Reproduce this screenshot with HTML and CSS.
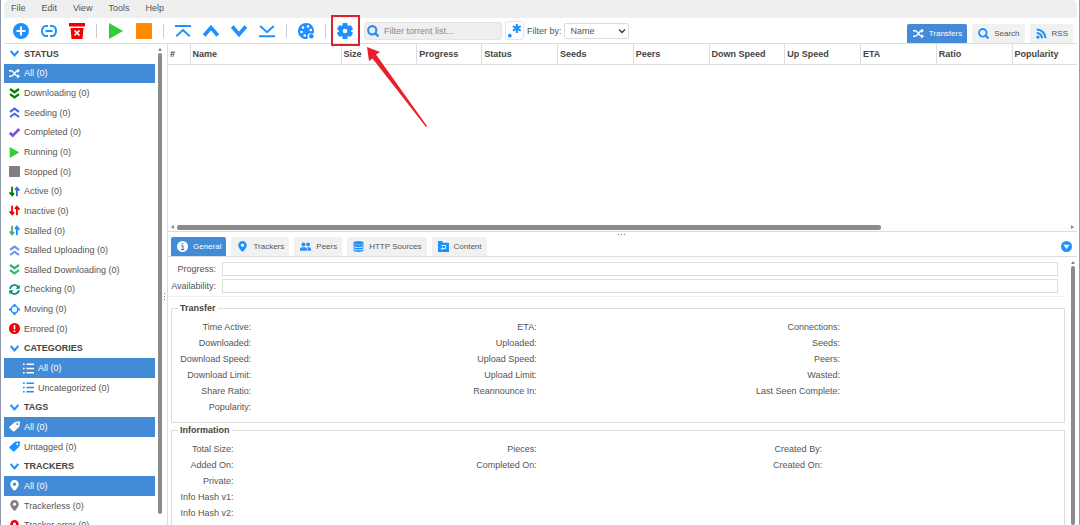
FILE: index.html
```html
<!DOCTYPE html>
<html lang="en">

<head>
    <meta charset="UTF-8">
    <title>qBittorrent WebUI</title>
    <link rel="stylesheet" href="styles.css">
</head>

<body>
    <!-- icon set -->
    <svg class="sprite" aria-hidden="true">
        <symbol id="i-add" viewBox="0 0 16 16"><circle cx="8" cy="8" r="8" fill="currentColor"/><path d="M8 3.500v9M3.500 8h9" stroke="#fff" stroke-width="2"/></symbol>
        <symbol id="i-link" viewBox="0 0 16 16"><path d="M7 3H5.200C2.500 3 1 5.300 1 8s1.500 5 4.200 5H7M9 3h1.800C13.500 3 15 5.300 15 8s-1.500 5-4.200 5H9M4.500 8h7" fill="none" stroke="currentColor" stroke-width="2"/><path d="M8 2v3M8 11v3" stroke="#fff" stroke-width="1.400"/></symbol>
        <symbol id="i-delete" viewBox="0 0 16 16"><path d="M0 0h16v3.500H0zM1.500 5h13L13.500 16h-11z" fill="#f00000"/><path d="M5.500 7.500l5 5M10.500 7.500l-5 5" stroke="#fff" stroke-width="1.700"/></symbol>
        <symbol id="i-play" viewBox="0 0 16 16"><path d="M1 0l14 8-14 8z" fill="#32cd32"/></symbol>
        <symbol id="i-stop" viewBox="0 0 16 16"><rect width="16" height="16" rx="1" fill="currentColor"/></symbol>
        <symbol id="i-top" viewBox="0 0 16 16"><path d="M0 3h16M1.200 13.200L8 7l6.800 6.200" fill="none" stroke="currentColor" stroke-width="2"/></symbol>
        <symbol id="i-up" viewBox="0 0 16 16"><path d="M1.200 12.500L8 4.500l6.800 8" fill="none" stroke="currentColor" stroke-width="3.700"/></symbol>
        <symbol id="i-down" viewBox="0 0 16 16"><path d="M1.200 3.500L8 11.500l6.800-8" fill="none" stroke="currentColor" stroke-width="3.700"/></symbol>
        <symbol id="i-bottom" viewBox="0 0 16 16"><path d="M0 13.200h16M1.200 3L8 9.200 14.800 3" fill="none" stroke="currentColor" stroke-width="2"/></symbol>
        <symbol id="i-palette" viewBox="0 0 16 16"><path d="M8.500 0C3.800 0 0 3.500 0 8.200 0 12.500 3.500 16 8 16c1.500 0 2.200-1 1.700-2.400-.5-1.500.3-3.100 2-3.100 2 0 3.800.8 4.200-1.300C16.600 4 13 0 8.500 0z" fill="currentColor"/><g fill="#fff"><circle cx="5" cy="4.500" r="1.300"/><circle cx="10" cy="3.500" r="1.300"/><circle cx="3.500" cy="9" r="1.300"/><circle cx="12.800" cy="7" r="1.300"/><circle cx="6.800" cy="12.500" r="1.300"/></g><circle cx="13.300" cy="13.200" r="2.300" fill="currentColor"/></symbol>
        <symbol id="i-gear" viewBox="0 0 16 16"><g fill="currentColor"><circle cx="8" cy="8" r="6.200"/><rect x="5.500" y="0" width="5" height="16" rx="1"/><rect x="5.500" y="0" width="5" height="16" rx="1" transform="rotate(60 8 8)"/><rect x="5.500" y="0" width="5" height="16" rx="1" transform="rotate(120 8 8)"/></g><circle cx="8" cy="8" r="2.300" fill="#fff"/></symbol>
        <symbol id="i-search" viewBox="0 0 16 16"><circle cx="7" cy="7" r="5.500" fill="none" stroke="currentColor" stroke-width="2.800"/><path d="M11 11l4.300 4.300" stroke="currentColor" stroke-width="3.200"/></symbol>
        <symbol id="i-regex" viewBox="0 0 16 16"><circle cx="3" cy="13.500" r="2" fill="currentColor"/><path d="M10.500 1v9.600M6.300 3.400l8.400 4.800M14.700 3.400L6.300 8.200" stroke="currentColor" stroke-width="2.200"/></symbol>
        <symbol id="i-shuffle" viewBox="0 0 16 16"><path d="M0 4h3.500c3 0 5.500 8 9 8h.5M0 12h3.500c3 0 5.500-8 9-8h.5" fill="none" stroke="currentColor" stroke-width="2.200"/><path d="M12 .6l4 3.400-4 3.400zM12 8.600l4 3.400-4 3.400z" fill="currentColor"/></symbol>
        <symbol id="i-rss" viewBox="0 0 16 16"><circle cx="2.800" cy="13.200" r="2.400" fill="currentColor"/><path d="M1 7.200A7.800 7.800 0 0 1 8.800 15M1 2.200A12.800 12.800 0 0 1 13.800 15" fill="none" stroke="currentColor" stroke-width="3"/></symbol>
        <symbol id="i-down2" viewBox="0 0 16 16"><path d="M1.500 1.500L8 6.200l6.500-4.700M1.500 9L8 13.700 14.500 9" fill="none" stroke="currentColor" stroke-width="3.300"/></symbol>
        <symbol id="i-up2" viewBox="0 0 16 16"><path d="M1.500 7L8 2.300 14.500 7M1.500 14.500L8 9.800l6.500 4.700" fill="none" stroke="currentColor" stroke-width="3"/></symbol>
        <symbol id="i-check" viewBox="0 0 16 16"><path d="M1.200 8.500l4.300 4L14.800 3" fill="none" stroke="currentColor" stroke-width="3.900"/></symbol>
        <symbol id="i-updown" viewBox="0 0 16 16"><path d="M4.500 1v11M.8 9.200l3.700 4.300 2.800-3.200" class="arrow-left"/><path d="M11.500 15V4M8.700 5.700l2.800-3.200 3.700 4.300" class="arrow-right"/></symbol>
        <symbol id="i-refresh" viewBox="0 0 16 16"><path d="M1.500 7A6.500 6.500 0 0 1 13 4M14.500 9A6.500 6.500 0 0 1 3 12" fill="none" stroke="currentColor" stroke-width="2.400"/><path d="M15.500 1v6h-6zM.5 15V9h6z" fill="currentColor"/></symbol>
        <symbol id="i-target" viewBox="0 0 16 16"><circle cx="8" cy="8" r="5" fill="none" stroke="currentColor" stroke-width="2.200"/><path d="M8 0v3M8 13v3M0 8h3M13 8h3" stroke="currentColor" stroke-width="3"/></symbol>
        <symbol id="i-error" viewBox="0 0 16 16"><circle cx="8" cy="8" r="8" fill="#f00000"/><path d="M8 3v6M8 10.800v2.200" stroke="#fff" stroke-width="2.400"/></symbol>
        <symbol id="i-list" viewBox="0 0 16 16"><path d="M0 1.800h2.500M0 8h2.500M0 14.200h2.500M5 1.800h11M5 8h11M5 14.200h11" stroke="currentColor" stroke-width="2.200"/></symbol>
        <symbol id="i-tag" viewBox="0 0 16 16"><path d="M8.500 1.500L15 .5c.6 0 1 .4 1 1l-.8 6.500-7.200 7c-.7.700-1.500.7-2.200 0L.7 10.300c-.6-.6-.6-1.500 0-2.100z" fill="currentColor"/><circle cx="12" cy="4.500" r="1.500" class="hole"/></symbol>
        <symbol id="i-pin" viewBox="0 0 16 16"><path d="M8 0a6.200 6.200 0 0 0-6.200 6.200C1.800 10.500 8 16 8 16s6.200-5.500 6.200-9.800A6.200 6.200 0 0 0 8 0z" fill="currentColor"/><circle cx="8" cy="6" r="2.300" class="hole"/></symbol>
        <symbol id="i-info" viewBox="0 0 16 16"><circle cx="8" cy="8" r="8" fill="#fff"/><path d="M6 7h2.500v5.500M5.800 12.500h5M7 3.800h2" fill="none" stroke="#438bd6" stroke-width="1.800"/></symbol>
        <symbol id="i-peers" viewBox="0 0 16 16"><g fill="currentColor"><circle cx="5" cy="5" r="2.900"/><circle cx="11.800" cy="5" r="2.700"/><path d="M0 14v-2.500C0 9.500 2.500 9 5 9s5 .5 5 2.500V14zM11 14v-3c0-.8-.3-1.400-.8-1.900 3.300-.3 5.800.3 5.800 2.400V14z"/></g></symbol>
        <symbol id="i-db" viewBox="0 0 16 16"><g fill="currentColor"><ellipse cx="8" cy="2.800" rx="7.500" ry="2.800"/><path d="M.5 4.500c2 2.300 13 2.300 15 0v2c-1 3-14 3-15 0zM.5 8.200c2 2.300 13 2.300 15 0v2c-1 3-14 3-15 0zM.5 11.900c2 2.300 13 2.300 15 0v1.600c-1 3.300-14 3.300-15 0z"/></g></symbol>
        <symbol id="i-folder" viewBox="0 0 16 16"><path d="M0 0h6l1.500 2.500H16V16H0z" fill="currentColor"/><path d="M5 6.500h6v4.500H5M6.800 9L4.800 11l2 2" fill="none" stroke="#fff" stroke-width="1.300"/></symbol>
        <symbol id="i-collapse" viewBox="0 0 16 16"><circle cx="8" cy="8" r="8" fill="currentColor"/><path d="M3.500 5.500h9L8 11.500z" fill="#fff"/></symbol>
    </svg>

    <div class="app">
        <nav class="menubar">
            <a href="#">File</a>
            <a href="#">Edit</a>
            <a href="#">View</a>
            <a href="#">Tools</a>
            <a href="#">Help</a>
        </nav>

        <div class="toolbar">
            <div class="actions">
                <button type="button" aria-label="Add torrent file"><svg><use href="#i-add"/></svg></button>
                <button type="button" aria-label="Add torrent link"><svg><use href="#i-link"/></svg></button>
                <button type="button" aria-label="Remove"><svg><use href="#i-delete"/></svg></button>
                <span class="separator"></span>
                <button type="button" aria-label="Start"><svg><use href="#i-play"/></svg></button>
                <button type="button" aria-label="Stop" class="orange"><svg><use href="#i-stop"/></svg></button>
                <span class="separator"></span>
                <button type="button" aria-label="Move to top"><svg><use href="#i-top"/></svg></button>
                <button type="button" aria-label="Move up"><svg><use href="#i-up"/></svg></button>
                <button type="button" aria-label="Move down"><svg><use href="#i-down"/></svg></button>
                <button type="button" aria-label="Move to bottom"><svg><use href="#i-bottom"/></svg></button>
                <span class="separator"></span>
                <button type="button" aria-label="Color scheme"><svg><use href="#i-palette"/></svg></button>
                <span class="separator"></span>
                <button type="button" aria-label="Options" class="marked">
                    <svg><use href="#i-gear"/></svg>
                    <span class="mark-box"></span>
                    <svg class="mark-arrow" viewBox="0 0 62 82"><path d="M1 1l13 5-4 2.500L61 80l-1 1L6.500 12.500 3 15z" fill="#e8202a"/></svg>
                </button>
            </div>
            <div class="search">
                <svg><use href="#i-search"/></svg>
                <input type="text" placeholder="Filter torrent list..." aria-label="Filter torrent list">
            </div>
            <button type="button" class="regex" aria-label="Use regular expressions"><svg><use href="#i-regex"/></svg></button>
            <label for="filterBy">Filter by:</label>
            <div class="select">
                <select id="filterBy">
                    <option>Name</option>
                    <option>Save path</option>
                </select>
                <svg viewBox="0 0 16 16"><path d="M2 5l6 6 6-6" fill="none" stroke="#333" stroke-width="2.600"/></svg>
            </div>
            <div class="tabs main-tabs">
                <button type="button" class="selected"><svg><use href="#i-shuffle"/></svg>Transfers</button>
                <button type="button"><svg><use href="#i-search"/></svg>Search</button>
                <button type="button"><svg><use href="#i-rss"/></svg>RSS</button>
            </div>
        </div>

        <div class="desktop">
            <aside class="sidebar">
                <div class="filters">
                    <button type="button" class="title"><svg><use href="#i-down"/></svg>STATUS</button>
                    <button type="button" class="selected"><svg><use href="#i-shuffle"/></svg>All (0)</button>
                    <button type="button"><svg class="green"><use href="#i-down2"/></svg>Downloading (0)</button>
                    <button type="button"><svg class="royal"><use href="#i-up2"/></svg>Seeding (0)</button>
                    <button type="button"><svg class="purple"><use href="#i-check"/></svg>Completed (0)</button>
                    <button type="button"><svg><use href="#i-play"/></svg>Running (0)</button>
                    <button type="button"><svg class="gray"><use href="#i-stop"/></svg>Stopped (0)</button>
                    <button type="button"><svg class="active"><use href="#i-updown"/></svg>Active (0)</button>
                    <button type="button"><svg class="inactive"><use href="#i-updown"/></svg>Inactive (0)</button>
                    <button type="button"><svg class="stalled"><use href="#i-updown"/></svg>Stalled (0)</button>
                    <button type="button"><svg class="cornflower"><use href="#i-up2"/></svg>Stalled Uploading (0)</button>
                    <button type="button"><svg class="seagreen"><use href="#i-down2"/></svg>Stalled Downloading (0)</button>
                    <button type="button"><svg class="teal"><use href="#i-refresh"/></svg>Checking (0)</button>
                    <button type="button"><svg><use href="#i-target"/></svg>Moving (0)</button>
                    <button type="button"><svg><use href="#i-error"/></svg>Errored (0)</button>
                    <button type="button" class="title"><svg><use href="#i-down"/></svg>CATEGORIES</button>
                    <button type="button" class="nested selected"><svg><use href="#i-list"/></svg>All (0)</button>
                    <button type="button" class="nested"><svg><use href="#i-list"/></svg>Uncategorized (0)</button>
                    <button type="button" class="title"><svg><use href="#i-down"/></svg>TAGS</button>
                    <button type="button" class="selected"><svg><use href="#i-tag"/></svg>All (0)</button>
                    <button type="button"><svg><use href="#i-tag"/></svg>Untagged (0)</button>
                    <button type="button" class="title"><svg><use href="#i-down"/></svg>TRACKERS</button>
                    <button type="button" class="selected"><svg><use href="#i-pin"/></svg>All (0)</button>
                    <button type="button"><svg class="gray"><use href="#i-pin"/></svg>Trackerless (0)</button>
                    <button type="button"><svg class="red"><use href="#i-pin"/></svg>Tracker error (0)</button>
                </div>
                <div class="scroll-v"><span class="tip"></span><span class="thumb"></span></div>
            </aside>

            <div class="splitter"><i></i><i></i><i></i></div>

            <main class="content">
                <section class="transfers">
                    <div class="table-wrap">
                        <table class="torrents">
                            <thead>
                                <tr>
                                    <th class="w-num">#</th>
                                    <th class="w-name">Name</th>
                                    <th>Size</th>
                                    <th class="w-small">Progress</th>
                                    <th>Status</th>
                                    <th>Seeds</th>
                                    <th>Peers</th>
                                    <th>Down Speed</th>
                                    <th>Up Speed</th>
                                    <th>ETA</th>
                                    <th>Ratio</th>
                                    <th class="w-small">Popularity</th>
                                </tr>
                            </thead>
                        </table>
                    </div>
                    <div class="scroll-h"><span class="tip"></span><span class="track"><span class="thumb"></span></span><span class="tip right"></span></div>
                </section>

                <section class="details">
                    <div class="details-head">
                        <div class="handle"><i></i><i></i><i></i></div>
                        <div class="tabs">
                            <button type="button" class="selected"><svg><use href="#i-info"/></svg>General</button>
                            <button type="button"><svg><use href="#i-pin"/></svg>Trackers</button>
                            <button type="button"><svg><use href="#i-peers"/></svg>Peers</button>
                            <button type="button"><svg><use href="#i-db"/></svg>HTTP Sources</button>
                            <button type="button"><svg><use href="#i-folder"/></svg>Content</button>
                        </div>
                        <button type="button" class="collapse" aria-label="Collapse panel"><svg><use href="#i-collapse"/></svg></button>
                    </div>

                    <div class="details-body">
                        <div class="general">
                            <div class="bars">
                                <label for="progress">Progress:</label>
                                <progress id="progress" value="0" max="100"></progress>
                                <label for="availability">Availability:</label>
                                <progress id="availability" value="0" max="100"></progress>
                            </div>

                            <fieldset>
                                <legend>Transfer</legend>
                                <table class="props transfer">
                                    <colgroup><col class="a"><col class="b"><col class="c"></colgroup>
                                    <tr><th>Time Active:</th><th>ETA:</th><th>Connections:</th><td></td></tr>
                                    <tr><th>Downloaded:</th><th>Uploaded:</th><th>Seeds:</th><td></td></tr>
                                    <tr><th>Download Speed:</th><th>Upload Speed:</th><th>Peers:</th><td></td></tr>
                                    <tr><th>Download Limit:</th><th>Upload Limit:</th><th>Wasted:</th><td></td></tr>
                                    <tr><th>Share Ratio:</th><th>Reannounce In:</th><th>Last Seen Complete:</th><td></td></tr>
                                    <tr><th>Popularity:</th><td></td><td></td><td></td></tr>
                                </table>
                            </fieldset>

                            <fieldset class="last">
                                <legend>Information</legend>
                                <table class="props info">
                                    <colgroup><col class="a"><col class="b"><col class="c"></colgroup>
                                    <tr><th>Total Size:</th><th>Pieces:</th><th>Created By:</th><td></td></tr>
                                    <tr><th>Added On:</th><th>Completed On:</th><th>Created On:</th><td></td></tr>
                                    <tr><th>Private:</th><td></td><td></td><td></td></tr>
                                    <tr><th>Info Hash v1:</th><td></td><td></td><td></td></tr>
                                    <tr><th>Info Hash v2:</th><td></td><td></td><td></td></tr>
                                </table>
                            </fieldset>
                        </div>
                        <div class="scroll-v"><span class="tip"></span><span class="thumb"></span></div>
                    </div>
                </section>
            </main>
        </div>
    </div>
</body>

</html>
```
FILE: styles.css
```css
* {
    box-sizing: border-box;
}

body {
    margin: 0;
    font: 9px/12px "Liberation Sans", Arial, sans-serif;
    color: #555;
    background-color: #fff;
}

button,
input,
select {
    font: inherit;
    color: inherit;
    margin: 0;
    padding: 0;
    border: 0;
    background: none;
}

svg {
    display: block;
    flex: none;
    color: #1e90ff;
}

.sprite {
    display: none;
}

.app {
    display: flex;
    flex-direction: column;
    height: 100vh;
    padding: 0 2px 0 3px;
    border-left: 1px solid #8d97aa;
    border-right: 1px solid #a0a0a0;
    overflow: hidden;
}

/* menu */
.menubar {
    display: flex;
    flex: none;
    gap: 16px;
    height: 18px;
    padding: 2px 7px;
    background-color: #efefef;
    border-radius: 6px 6px 0 0;
}

.menubar a {
    color: inherit;
    text-decoration: none;
}

/* toolbar */
.toolbar {
    display: flex;
    flex: none;
    align-items: center;
    height: 26px;
    padding: 0 4px 0 3px;
    border-bottom: 1px solid #ddd;
}

.actions {
    display: flex;
    align-items: center;
}

.actions button {
    padding: 0 6px;
}

.actions svg {
    width: 16px;
    height: 16px;
}

.actions .orange svg {
    color: #ff8c00;
}

.separator {
    width: 1px;
    height: 14px;
    margin: 0 5px;
    background-color: #ccc;
}

/* callout over the options button */
.marked {
    position: relative;
}

.mark-box {
    position: absolute;
    inset: -8px -1px -7px 0;
    border: 2px solid #d9232e;
}

.actions .mark-arrow {
    position: absolute;
    left: 35px;
    top: 23px;
    width: 62px;
    height: 82px;
    z-index: 2;
}

.search {
    display: flex;
    align-items: center;
    gap: 5px;
    width: 138px;
    height: 18px;
    margin-left: 5px;
    padding: 0 2px;
    border: 1px solid #e4e4e4;
    border-radius: 3px;
    background-color: #efefef;
}

.search svg {
    width: 12px;
    height: 12px;
}

.search input {
    width: 100%;
    min-width: 0;
    outline: 0;
}

.search input::placeholder {
    color: #888;
}

.regex {
    margin: 0 3px;
    padding: 1px;
    border: 1px solid #e4e4e4;
    border-radius: 3px;
}

.regex svg {
    width: 15px;
    height: 15px;
}

.select {
    display: grid;
    align-items: center;
    width: 65px;
    height: 16px;
    margin-left: 2px;
    border: 1px solid #ddd;
    border-radius: 2px;
}

.select select {
    grid-area: 1 / 1;
    width: 100%;
    padding-left: 6px;
    appearance: none;
}

.select svg {
    grid-area: 1 / 1;
    justify-self: end;
    width: 8px;
    height: 8px;
    margin-right: 2px;
    pointer-events: none;
}

/* tabs */
.tabs {
    display: flex;
    gap: 5px;
    font-size: 8px;
}

.tabs button {
    display: flex;
    align-items: center;
    gap: 5px;
    height: 19px;
    padding: 0 5px 0 6px;
    border-radius: 2px 2px 0 0;
    background-color: #f1f1f1;
}

.tabs svg {
    width: 11px;
    height: 11px;
}

.tabs .selected {
    color: #fff;
    background-color: #438bd6;
}

.tabs .selected svg {
    color: #fff;
}

.main-tabs {
    align-self: flex-end;
    margin-left: auto;
}

/* layout */
.desktop {
    display: flex;
    flex: 1;
    min-height: 0;
}

.sidebar {
    display: flex;
    flex: none;
    gap: 2px;
    width: 158px;
    overflow: hidden;
}

/* last row is half scrolled out of view */
.filters {
    display: grid;
    flex: 1;
    grid-auto-rows: 1fr;
    margin-bottom: -10px;
}

.filters button {
    display: flex;
    align-items: center;
    gap: 4px;
    min-height: 0;
    padding-left: 5px;
    text-align: left;
    white-space: nowrap;
}

.filters svg {
    width: 11px;
    height: 11px;
}

.filters .title {
    font-weight: bold;
    color: #444;
}

.filters .title svg {
    width: 9px;
    height: 9px;
    margin: 0 1px;
}

.filters .selected {
    --hole: #438bd6;
    color: #fff;
    background-color: #438bd6;
}

.filters .selected svg {
    color: #fff;
}

.filters .nested {
    padding-left: 19px;
}

.hole {
    fill: var(--hole, #fff);
}

.filters .green { color: #008000; }
.filters .royal { color: #4169e1; }
.filters .purple { color: #8250df; }
.filters .gray { color: #808080; }
.filters .cornflower { color: #6495ed; }
.filters .seagreen { color: #3cb371; }
.filters .teal { color: #00806e; }
.filters .red { color: #f00000; }

.arrow-left,
.arrow-right {
    fill: none;
    stroke-width: 2.6;
}

.arrow-left { stroke: var(--left); }
.arrow-right { stroke: var(--right); }

.active { --left: #008000; --right: #4169e1; }
.inactive { --left: #f00000; --right: #f00000; }
.stalled { --left: #3cb371; --right: #1e90ff; }

/* scrollbars */
.scroll-v {
    display: flex;
    flex: none;
    flex-direction: column;
    align-items: center;
    gap: 2px;
    width: 5px;
    padding-top: 4px;
}

.tip {
    flex: none;
    border: 2px solid transparent;
    border-top: 0;
    border-bottom: 3px solid #888;
}

.thumb {
    flex: 1;
    width: 4px;
    border-radius: 2px;
    background-color: #8b8b8b;
}

.sidebar .thumb {
    margin-bottom: 11px;
}

.scroll-h {
    display: flex;
    flex: none;
    align-items: center;
    gap: 3px;
    height: 8px;
    padding: 0 3px;
    background-color: #fcfcfc;
}

.scroll-h .tip {
    border: 2px solid transparent;
    border-left: 0;
    border-right: 3px solid #888;
}

.scroll-h .right {
    border-right: 0;
    border-left: 3px solid #888;
}

.track {
    display: flex;
    flex: 1;
}

.track .thumb {
    flex: 0 0 79%;
    height: 5px;
}

.splitter {
    display: flex;
    flex: none;
    flex-direction: column;
    justify-content: center;
    align-items: center;
    gap: 2px;
    width: 6px;
    padding-top: 24px;
    border-right: 1px solid #ddd;
}

.splitter i,
.handle i {
    width: 1px;
    height: 1px;
    background-color: #777;
}

.content {
    display: flex;
    flex: 1;
    flex-direction: column;
    min-width: 0;
}

/* torrent list */
.transfers {
    display: flex;
    flex: 39;
    flex-direction: column;
    min-height: 0;
    border-bottom: 1px solid #ddd;
}

.table-wrap {
    flex: 1;
    overflow: hidden;
}

.torrents {
    width: 100%;
    table-layout: fixed;
    border-collapse: collapse;
}

.torrents th {
    height: 20px;
    padding: 0 2px;
    border-right: 1px solid #ddd;
    border-bottom: 1px solid #ddd;
    text-align: left;
    color: #444;
    white-space: nowrap;
}

.torrents th:last-child {
    border-right: 0;
}

.torrents .w-num { width: 22px; }
.torrents .w-name { width: 151px; }
.torrents .w-small { width: 65px; }

/* details */
.details {
    display: flex;
    flex: 61;
    flex-direction: column;
    min-height: 0;
}

.details-head {
    display: grid;
    grid-template-columns: 1fr auto;
    flex: none;
    padding: 2px 5px 0 3px;
    border-bottom: 1px solid #ddd;
}

.handle {
    display: flex;
    grid-column: 1 / 3;
    justify-content: center;
    gap: 2px;
    height: 3px;
}

.collapse svg {
    width: 11px;
    height: 11px;
}

.details-body {
    display: flex;
    flex: 1;
    gap: 5px;
    min-height: 0;
    padding-right: 2px;
}

.general {
    display: flex;
    flex: 1;
    flex-direction: column;
    overflow: hidden;
}

.bars {
    display: grid;
    grid-template-columns: 46px 1fr;
    gap: 3px 6px;
    padding: 5px 7px 3px 2px;
    border-bottom: 1px solid #eee;
    margin-bottom: 5px;
}

.bars label {
    text-align: right;
    line-height: 14px;
}

.bars progress {
    appearance: none;
    width: 100%;
    height: 14px;
    border: 1px solid #ddd;
    background: none;
}

.bars progress::-webkit-progress-bar {
    background: none;
}

fieldset {
    margin: 0 0 1px 3px;
    padding: 5px 0 7px;
    border: 1px solid #ddd;
}

/* runs on below the fold */
fieldset.last {
    flex: 1 0 auto;
    margin-bottom: -8px;
}

legend {
    margin-left: 6px;
    padding: 0 2px;
    font-weight: bold;
    color: #444;
}

.props {
    width: 100%;
    table-layout: fixed;
    border-collapse: collapse;
}

.props th,
.props td {
    height: 16px;
    padding: 0 1px 0 0;
    font-weight: normal;
    text-align: right;
}

.transfer .a { width: 9%; }
.transfer .b { width: 32%; }
.transfer .c { width: 34%; }

.info .a { width: 7%; }
.info .b { width: 34%; }
.info .c { width: 32%; }
```
